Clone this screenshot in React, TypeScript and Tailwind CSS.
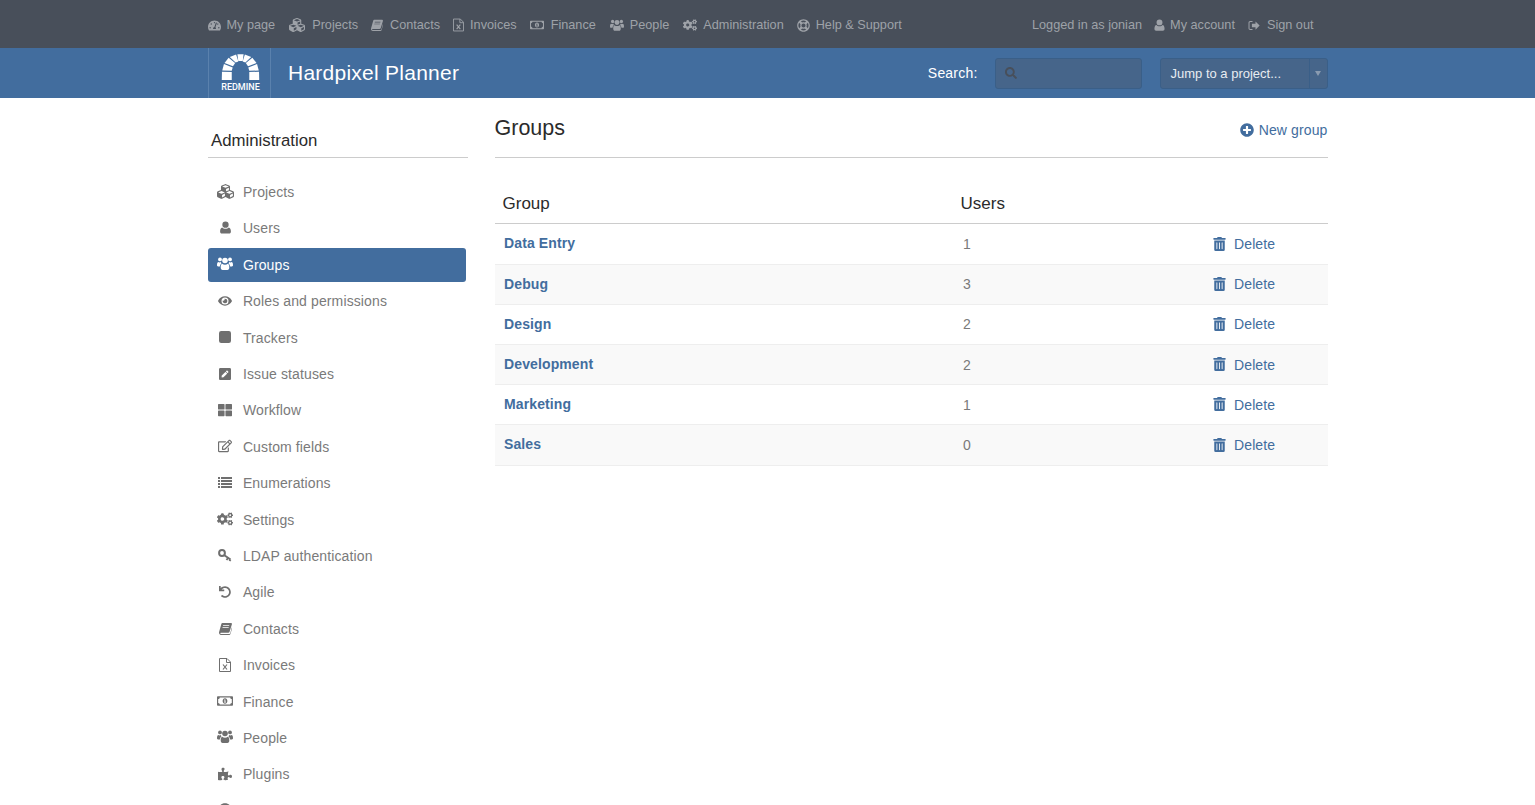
import React from "react";
import {
  FaTachometerAlt, FaCubes, FaRegMoneyBillAlt, FaCogs, FaRegLifeRing,
  FaSearch, FaEye, FaPenSquare, FaThLarge, FaRegEdit, FaUndo,
  FaPuzzlePiece, FaPlusCircle, FaTrashAlt, FaInfoCircle,
} from "react-icons/fa";

type P = { className?: string };
type IconT = React.ComponentType<P>;

const SignOut = ({ className }: P) => (
  <svg viewBox="0 0 16 14" className={className} fill="currentColor">
    <path d="M6 2.2H3.2C2.5 2.2 2 2.7 2 3.4v7.2c0 .7.5 1.2 1.2 1.2H6V13H3C1.6 13 .7 12 .7 10.7V3.3C.7 2 1.6 1 3 1h3v1.2z" />
    <path d="M10 1.5 15.5 7 10 12.5V9.4H5.2V4.6H10V1.5z" />
  </svg>
);
const User = ({ className }: P) => (
  <svg viewBox="0 0 12 14" className={className} fill="currentColor">
    <path d="M6 .5a3.4 3.4 0 1 0 0 6.900A3.4 3.4 0 0 0 6 .5z" />
    <path d="M2.400 6.900C1 7.200.2 8.600.1 11c-.1 1.700.7 2.600 2 2.600h7.800c1.300 0 2.100-.9 2-2.600-.1-2.400-.9-3.800-2.300-4.100C8.800 7.900 7.500 8.400 6 8.400s-2.800-.5-3.600-1.500z" />
  </svg>
);
const Users = ({ className }: P) => (
  <svg viewBox="0 0 16 14" className={className} fill="currentColor">
    <circle cx="3" cy="2.400" r="1.900" />
    <circle cx="13" cy="2.400" r="1.900" />
    <circle cx="8" cy="3.500" r="2.800" />
    <path d="M1.200 5c.9.500 1.900.5 2.700.1.100.5.300.9.600 1.300C3.600 7 3 8.200 2.900 9.500H1.100C.4 9.500 0 9 0 8.300 0 6.800.2 5.300 1.200 5z" />
    <path d="M14.800 5c-.9.500-1.900.5-2.700.1-.1.500-.3.900-.6 1.300.9.600 1.500 1.800 1.600 3.100h1.800c.7 0 1.100-.5 1.100-1.200 0-1.500-.2-3-1.200-3.300z" />
    <path d="M5.200 6.700c.8.700 1.700 1 2.800 1s2-.3 2.800-1c1.200.2 1.500 1.800 1.500 3.900 0 1.400-.7 2.400-1.900 2.400H5.600c-1.200 0-1.900-1-1.900-2.400 0-2.100.3-3.700 1.500-3.900z" />
  </svg>
);
const Book = ({ className }: P) => (
  <svg viewBox="0 0 14 14" className={className} fill="currentColor">
    <path
      fillRule="evenodd"
      d="M3.700 1h9.300c.7 0 1.100.6.900 1.300l-2.500 8.300c-.2.700-.8 1.100-1.500 1.100H2.100c-.5 0-.8.200-.8.500 0 .4.300.6.900.6h9.100c.3 0 .6-.2.700-.5l2-6.800v1.900l-1.700 5.600c-.2.600-.7 1-1.400 1H2.100C1 14 0 13 0 11.700l.1-.8L2.500 2.200C2.700 1.500 3.100 1 3.700 1zM4.500 3.300l-.2.700h6.600l.2-.7H4.500zM3.900 5.400l-.2.700h6.600l.2-.7H3.900z"
    />
  </svg>
);
const ListI = ({ className }: P) => (
  <svg viewBox="0 0 14 11" className={className} fill="currentColor">
    <rect x="0" y="0" width="2" height="2" />
    <rect x="3" y="0" width="11" height="2" />
    <rect x="0" y="3" width="2" height="2" />
    <rect x="3" y="3" width="11" height="2" />
    <rect x="0" y="6" width="2" height="2" />
    <rect x="3" y="6" width="11" height="2" />
    <rect x="0" y="9" width="2" height="2" />
    <rect x="3" y="9" width="11" height="2" />
  </svg>
);
const Key = ({ className }: P) => (
  <svg viewBox="0 0 14 13" className={className} fill="none" stroke="currentColor">
    <circle cx="4" cy="4" r="2.900" strokeWidth="2" />
    <path d="M6 6 12.500 10.500M10 9l-1.500 2M12.500 10.500 11.500 12" strokeWidth="2" />
  </svg>
);
const Invoice = ({ className }: P) => (
  <svg viewBox="0 0 12 14" className={className} fill="none" stroke="currentColor" strokeWidth="1">
    <path d="M.5.5h7.500l3.500 3.500v9.500H.5z" />
    <path d="M7.500.500v4h4" />
    <path d="M4 6.500 8 11.500M8 6.500 4 11.500" strokeWidth="1.200" />
  </svg>
);
const Sq = ({ className }: P) => (
  <svg viewBox="0 0 12 12" className={className} fill="currentColor">
    <rect width="12" height="12" rx="2.200" />
  </svg>
);

const top: [IconT, string, string, string][] = [
  [FaTachometerAlt, "My page", "h-[13px] w-[13px] mr-[6px]", "mr-[14px]"],
  [FaCubes, "Projects", "h-[16px] w-[16px] mr-[7px]", "mr-[13px]"],
  [Book, "Contacts", "h-[12px] w-[12px] mr-[7px]", "mr-[13px]"],
  [Invoice, "Invoices", "h-[14px] w-[11px] mr-[6px]", "mr-[13px]"],
  [FaRegMoneyBillAlt, "Finance", "h-[14px] w-[14px] mr-[7px]", "mr-[14px]"],
  [Users, "People", "h-[13px] w-[14px] mr-[6px]", "mr-[14px]"],
  [FaCogs, "Administration", "h-[14px] w-[14px] mr-[6px]", "mr-[13px]"],
  [FaRegLifeRing, "Help & Support", "h-[13px] w-[13px] mr-[6px]", ""],
];

const side: [IconT, string, string][] = [
  [FaCubes, "Projects", "h-[17px] w-[17px]"],
  [User, "Users", "h-[13px] w-[11px]"],
  [Users, "Groups", "h-[14px] w-[16px]"],
  [FaEye, "Roles and permissions", "h-[14px] w-[14px]"],
  [Sq, "Trackers", "h-[12px] w-[12px]"],
  [FaPenSquare, "Issue statuses", "h-[14px] w-[12px]"],
  [FaThLarge, "Workflow", "h-[14px] w-[14px]"],
  [FaRegEdit, "Custom fields", "h-[14px] w-[14px]"],
  [ListI, "Enumerations", "h-[11px] w-[14px]"],
  [FaCogs, "Settings", "h-[16px] w-[16px]"],
  [Key, "LDAP authentication", "h-[13px] w-[14px]"],
  [FaUndo, "Agile", "h-[12px] w-[12px]"],
  [Book, "Contacts", "h-[13px] w-[13px]"],
  [Invoice, "Invoices", "h-[14px] w-[12px]"],
  [FaRegMoneyBillAlt, "Finance", "h-[16px] w-[16px]"],
  [Users, "People", "h-[14px] w-[16px]"],
  [FaPuzzlePiece, "Plugins", "h-[14px] w-[14px]"],
  [FaInfoCircle, "", "h-[14px] w-[14px]"],
];

const rows: [string, string][] = [
  ["Data Entry", "1"],
  ["Debug", "3"],
  ["Design", "2"],
  ["Development", "2"],
  ["Marketing", "1"],
  ["Sales", "0"],
];

function Logo() {
  return (
    <div className="flex h-[50px] w-[63px] shrink-0 flex-col items-center border-x border-[#5a81ad] pl-[3px]">
      <svg viewBox="0 0 40 26" preserveAspectRatio="none" className="mt-[6px] h-[26px] w-[39px]" fill="#fff">
        <path d="M.8 26 1 17.800 11 18 11 26Z" />
        <path d="M1.300 16.500 3 10 12 13.500 11 16.800Z" />
        <path d="M3.600 9 7.800 3.800 14.500 9 12.300 12.300Z" />
        <path d="M9 3 15.500.600 17.800 7.500 15 8.500Z" />
        <path d="M16.800.2H23.200L22.300 7H17.700Z" />
        <path d="M24.500.600 31 3 25 8.500 22.200 7.500Z" />
        <path d="M32.200 3.800 36.400 9 27.700 12.300 25.500 9Z" />
        <path d="M37 10 38.700 16.500 29 16.800 28 13.500Z" />
        <path d="M39 17.800 39.200 26H29V18Z" />
      </svg>
      <span className="mt-[3px] text-[9px] leading-[9px] font-medium tracking-normal text-white [font-family:Roboto,'Liberation_Sans',sans-serif]">
        REDMINE
      </span>
    </div>
  );
}

export default function App() {
  return (
    <div className="h-[805px] w-full overflow-hidden bg-white text-[14px] tracking-[0.12px] [font-family:'Liberation_Sans',Arial,sans-serif]">
      <div className="h-[48px] bg-[#484f5a] text-[12.7px] tracking-normal text-[#9ea2a8]">
        <div className="mx-auto flex h-full w-[1120px] items-center justify-between pt-[3px]">
          <div className="flex items-center">
            {top.map(([I, t, ic, m]) => (
              <a key={t} className={`flex items-center ${m}`}>
                <I className={ic} />
                {t}
              </a>
            ))}
          </div>
          <div className="mr-[14px] flex items-center">
            <span className="mr-[12px]">Logged in as jonian</span>
            <User className="mr-[5px] h-[12px] w-[11px]" />
            <span className="mr-[13px]">My account</span>
            <SignOut className="mr-[7px] h-[11px] w-[12px]" />
            <span>Sign out</span>
          </div>
        </div>
      </div>
      <div className="h-[50px] bg-[#426d9e]">
        <div className="mx-auto flex h-full w-[1120px] items-center">
          <Logo />
          <div className="ml-[17.500px] text-[21px] tracking-[0.25px] text-white">Hardpixel Planner</div>
          <div className="ml-auto flex items-center">
            <span className="mr-[17px] tracking-[0.2px] text-white">Search:</span>
            <div className="mr-[18px] flex h-[31px] w-[147px] items-center rounded-[3px] border border-[#3a5f88] bg-[#46658a] pl-[9px]">
              <FaSearch className="h-[12px] w-[12px] text-[#484f5a]" />
            </div>
            <div className="flex h-[31px] w-[168px] items-center rounded-[3px] border border-[#3a5f88] bg-[#46658a] text-[13px] tracking-normal text-[#e8ecf1]">
              <span className="flex-1 pl-[10px] pt-[1px]">Jump to a project...</span>
              <span className="flex h-full w-[18px] items-center justify-center border-l border-[#3a5f88]">
                <span className="h-0 w-0 border-x-[3.500px] border-t-[5px] border-x-transparent border-t-[#8a9bb0]" />
              </span>
            </div>
          </div>
        </div>
      </div>
      <div className="mx-auto flex w-[1120px] items-start">
        <aside className="mr-[27px] w-[260px] shrink-0">
          <div className="flex h-[60px] items-end border-b border-[#ccc] pb-[4px] pl-[3.500px] text-[16.800px] leading-[24px] tracking-normal text-[#2b2b2b]">
            Administration
          </div>
          <ul className="mt-[17.550px]">
            {side.map(([I, t, ic]) => {
              const on = t === "Groups";
              return (
                <li
                  key={t || "info"}
                  className={`mb-[2.400px] flex h-[34px] w-[258px] items-center rounded-[3px] ${
                    on ? "bg-[#426d9e] text-white" : "text-[#7a7a7a]"
                  }`}
                >
                  <span className="flex w-[35.400px] shrink-0 justify-center pb-[2px]">
                    <I className={`${ic} ${on ? "text-white" : "text-[#6f6f6f]"}`} />
                  </span>
                  {t}
                </li>
              );
            })}
          </ul>
        </aside>
        <main className="min-w-0 flex-1">
          <div className="flex h-[60px] items-start justify-between border-b border-[#ccc]">
            <h2 className="mt-[17px] text-[21.500px] leading-[26px] tracking-normal text-[#2b2b2b]">Groups</h2>
            <a className="mt-[23px] flex items-center leading-[18px] text-[#426d9e]">
              <FaPlusCircle className="mr-[5px] h-[14px] w-[14px]" />
              New group
            </a>
          </div>
          <div className="mt-[25px] flex h-[41.400px] items-center border-b border-[#ccc] pt-[2px] text-[17px] tracking-normal text-[#2b2b2b]">
            <div className="w-[466px] pl-[8px]">Group</div>
            <div>Users</div>
          </div>
          {rows.map(([g, u], i) => (
            <div
              key={g}
              className={`flex h-[40.170px] items-center border-b border-[#eeeeee] ${i % 2 ? "bg-[#f9f9f9]" : "bg-white"} ${i === 5 ? "box-content" : ""}`}
            >
              <a className={`w-[468.500px] pl-[9.500px] font-bold text-[#426d9e] ${i === 5 ? "pb-[1px]" : ""}`}>{g}</a>
              <div className="w-[250px] pt-[1.240px] text-[#7a7a7a]">{u}</div>
              <a className="flex items-center pt-[1.240px] text-[#426d9e]">
                <FaTrashAlt className="mr-[8px] mb-[2px] h-[14px] w-[13px]" />
                Delete
              </a>
            </div>
          ))}
        </main>
      </div>
    </div>
  );
}
